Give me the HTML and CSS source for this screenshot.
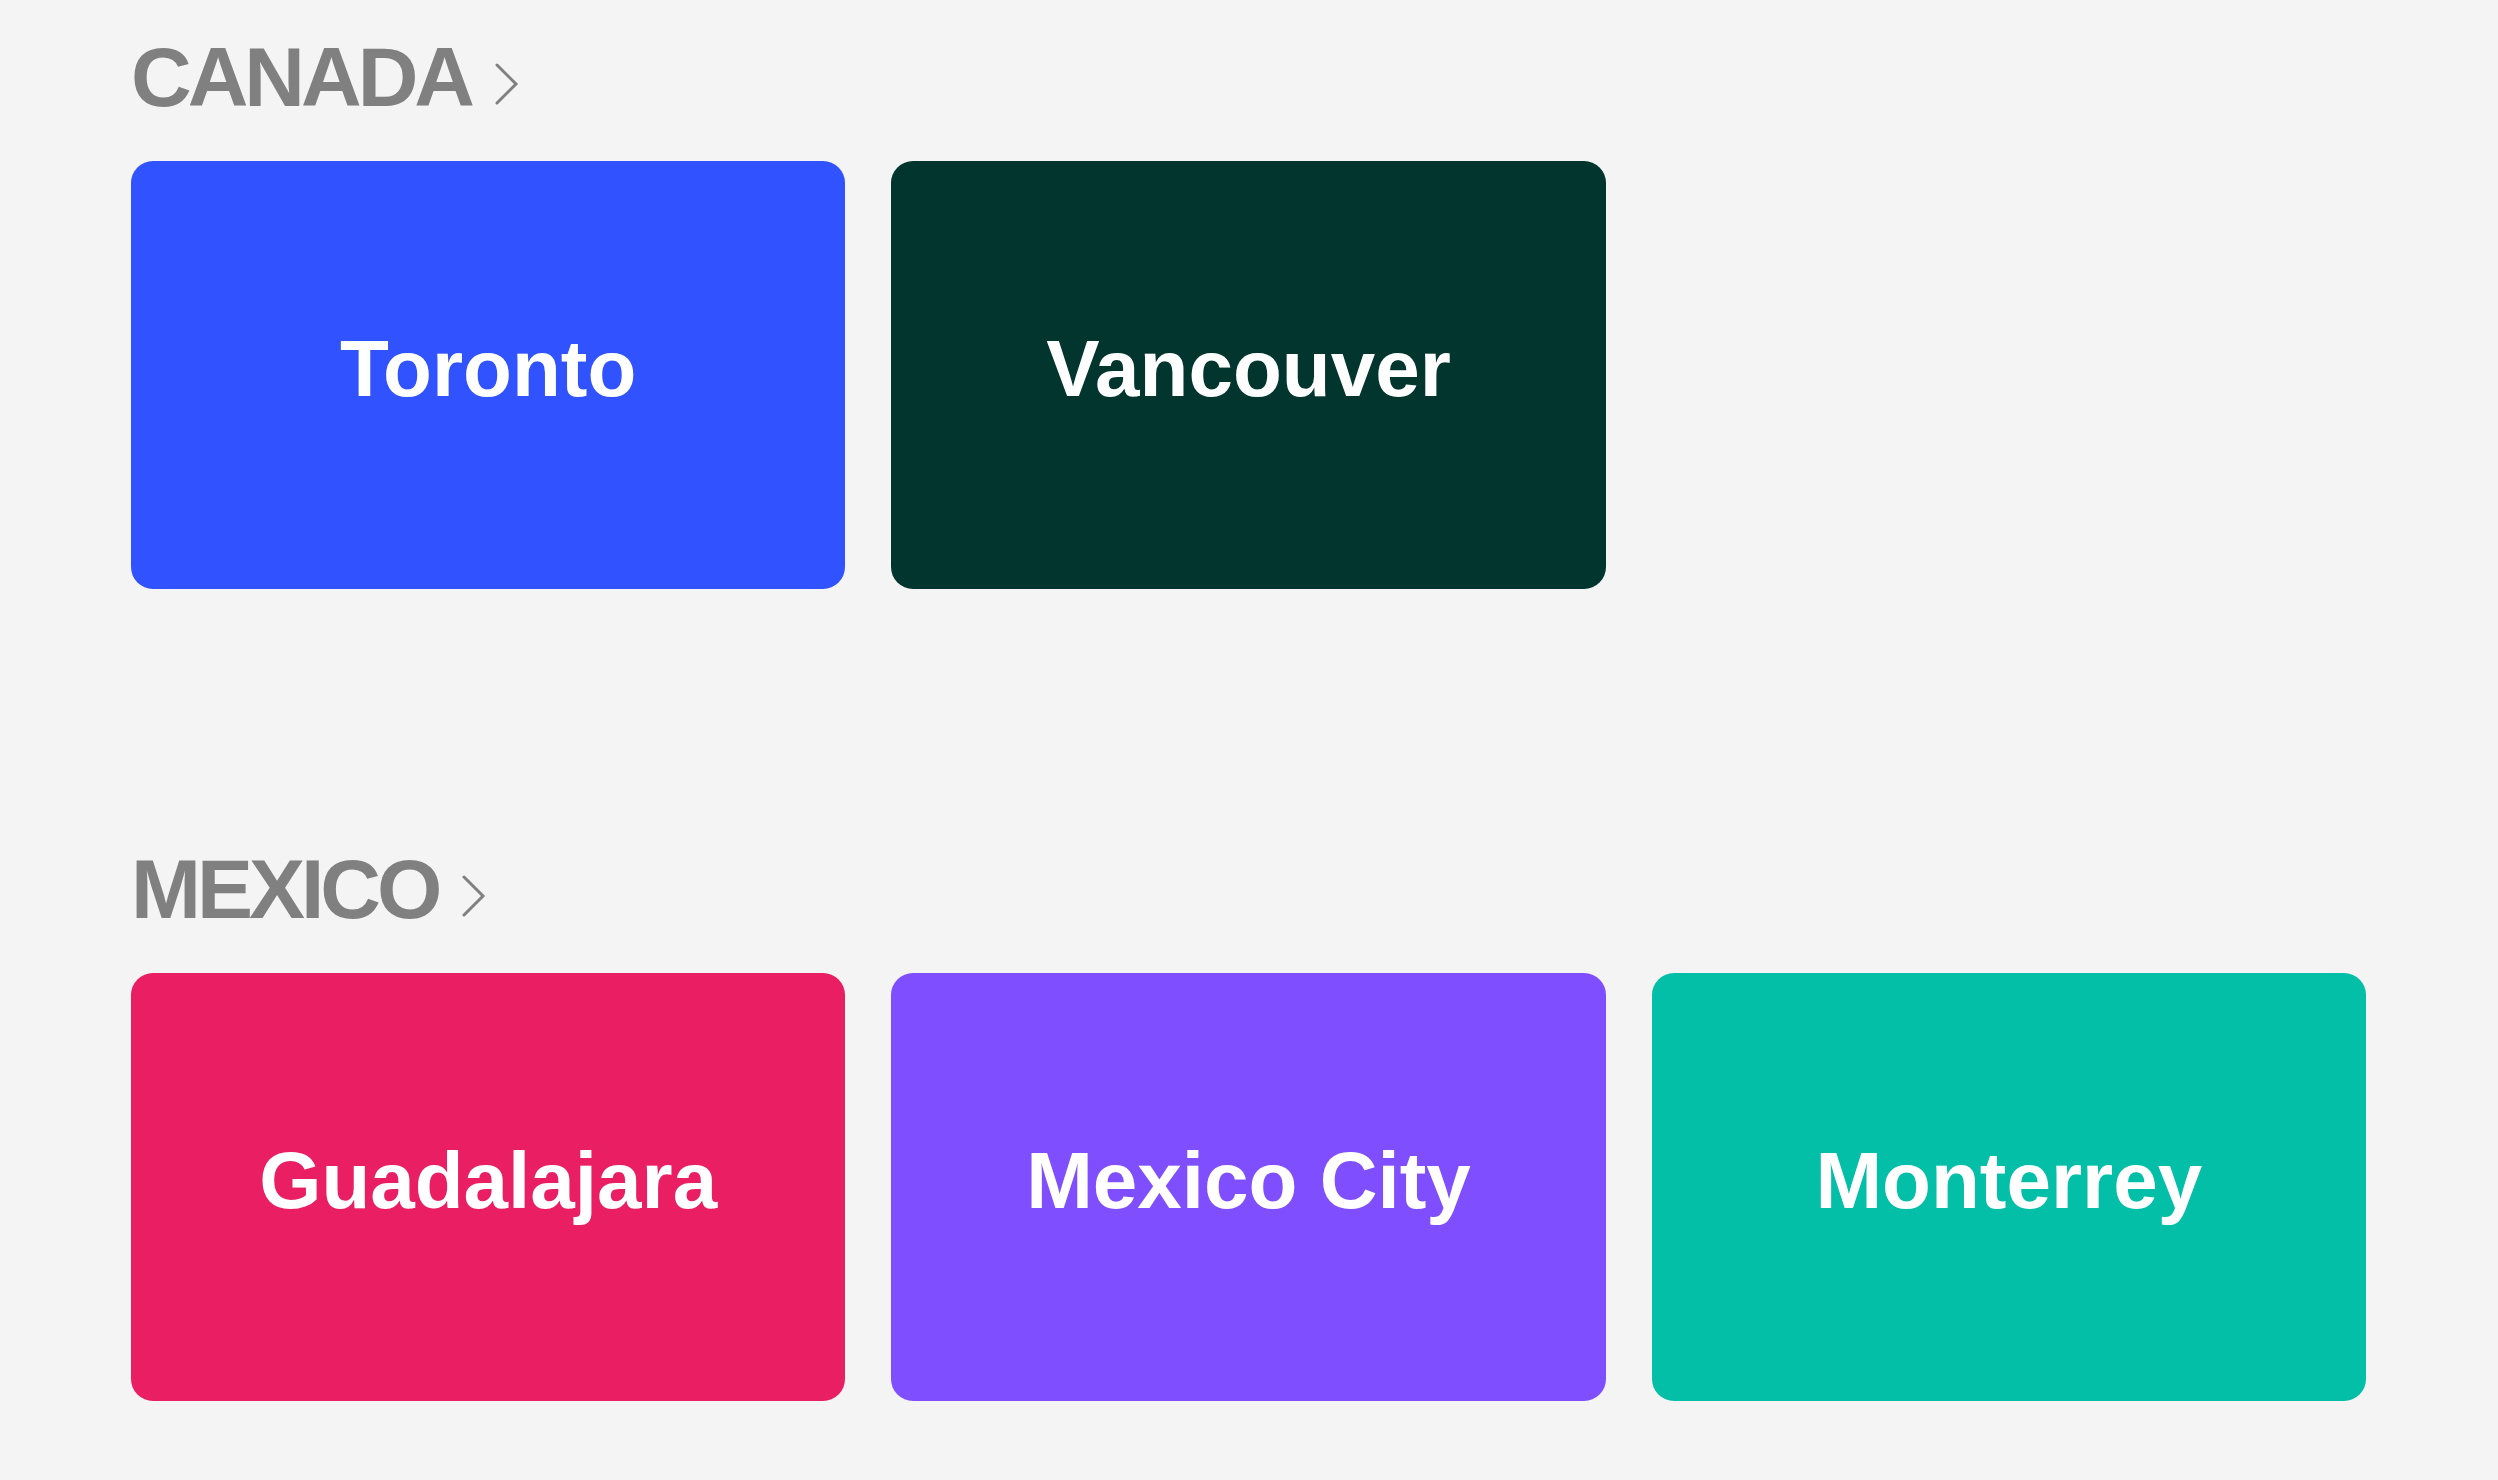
FILE: index.html
```html
<!DOCTYPE html>
<html lang="en">
<head>
    <meta charset="UTF-8">
    <meta name="viewport" content="width=device-width, initial-scale=1.0">
    <title>Cities</title>
    <link rel="stylesheet" href="styles.css">
</head>
<body>
    <main class="regions">
        <section class="region">
            <a href="#" class="region-title">
                <span>CANADA</span>
                <svg class="chevron" viewBox="0 0 24 42" width="24" height="42" aria-hidden="true">
                    <polyline points="2,2 21,21 2,40" fill="none" stroke="currentColor" stroke-width="3" stroke-linecap="round" stroke-linejoin="miter"/>
                </svg>
            </a>
            <div class="city-grid">
                <a href="#" class="city-card toronto">Toronto</a>
                <a href="#" class="city-card vancouver">Vancouver</a>
            </div>
        </section>

        <section class="region">
            <a href="#" class="region-title">
                <span>MEXICO</span>
                <svg class="chevron" viewBox="0 0 24 42" width="24" height="42" aria-hidden="true">
                    <polyline points="2,2 21,21 2,40" fill="none" stroke="currentColor" stroke-width="3" stroke-linecap="round" stroke-linejoin="miter"/>
                </svg>
            </a>
            <div class="city-grid">
                <a href="#" class="city-card guadalajara">Guadalajara</a>
                <a href="#" class="city-card mexico-city">Mexico City</a>
                <a href="#" class="city-card monterrey">Monterrey</a>
            </div>
        </section>
    </main>
</body>
</html>
```

FILE: styles.css
```css
* {
    margin: 0;
    padding: 0;
    box-sizing: border-box;
}

body {
    font-family: 'Liberation Sans', Arial, sans-serif;
    background: #f4f4f4;
    min-height: 100vh;
}

.regions {
    display: flex;
    flex-direction: column;
    gap: 258px;
    padding: 35px 132px 60px 131px;
}

.region-title {
    display: inline-flex;
    align-items: baseline;
    color: #808080;
    text-decoration: none;
    font-size: 84px;
    font-weight: 700;
    line-height: 1;
    letter-spacing: -4px;
    margin-bottom: 42px;
}

.chevron {
    margin-left: 24px;
    width: 24px;
    height: 42px;
    position: relative;
    top: 0;
    align-self: flex-end;
    margin-bottom: 14px;
}

.city-grid {
    display: grid;
    grid-template-columns: repeat(3, 1fr);
    gap: 46px;
}

.city-card {
    display: flex;
    align-items: center;
    justify-content: center;
    height: 428px;
    padding-bottom: 12px;
    border-radius: 22px;
    color: #fff;
    text-decoration: none;
    font-size: 80px;
    font-weight: 700;
    line-height: 1;
}

.toronto { background: #3152ff; }
.vancouver { background: #02352e; }
.guadalajara { background: #e91e63; }
.mexico-city { background: #7f4fff; }
.monterrey { background: #04bfa8; }
```
